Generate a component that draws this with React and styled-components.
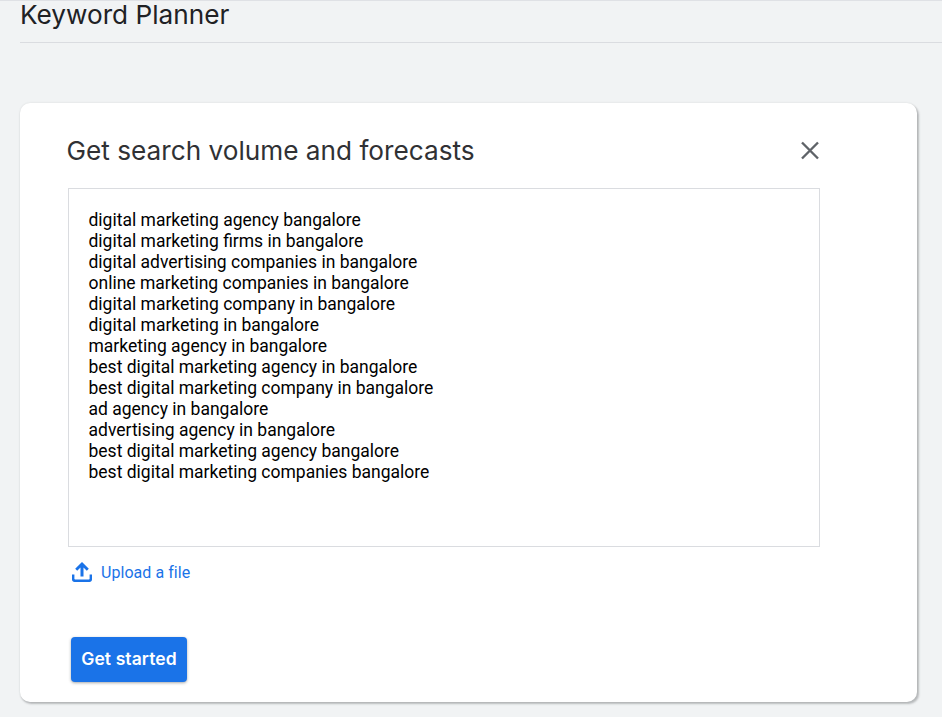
import React from 'react';
import styled, { createGlobalStyle } from 'styled-components';

const GlobalStyle = createGlobalStyle`
  html, body {
    margin: 0;
    height: 100%;
    background: #f1f3f4;
    overflow: hidden;
  }
`;

const Page = styled.div`
  height: 717px;
  box-sizing: border-box;
  padding: 0 0 0 20px;
  border-top: 1px solid #dfe1e5;
  font-family: Roboto, sans-serif;
`;

const Header = styled.header`
  height: 42px;
  box-sizing: border-box;
  border-bottom: 1px solid #dadce0;
  display: flex;
  align-items: flex-start;
`;

const PageTitle = styled.h1`
  margin: 0;
  font-family: Inter, sans-serif;
  font-size: 26.200px;
  line-height: 28px;
  font-weight: 400;
  color: #202124;
`;

const Card = styled.section`
  width: 896.500px;
  height: 599px;
  box-sizing: border-box;
  margin-top: 60px;
  padding: 30px 96.500px 0 47px;
  background: #fff;
  border-radius: 10px;
  box-shadow: 1.500px 2px 2px rgba(60, 64, 67, 0.3), 0 0 2px rgba(60, 64, 67, 0.15);
`;

const CardHead = styled.div`
  display: flex;
  justify-content: space-between;
  align-items: center;
  height: 36px;
`;

const CardTitle = styled.h2`
  margin: 0 0 0 -0.500px;
  font-family: Inter, sans-serif;
  font-size: 26.200px;
  line-height: 36px;
  font-weight: 400;
  color: #303134;
`;

const CloseButton = styled.button`
  display: flex;
  padding: 0;
  border: 0;
  background: none;
  cursor: pointer;
`;

const KeywordBox = styled.div`
  margin: 19px 0 0 1px;
  height: 359px;
  box-sizing: border-box;
  padding: 21px 19.500px;
  border: 1px solid #dadce0;
  font-size: 17.500px;
  line-height: 21px;
  color: #000;
`;

const KeywordLine = styled.div`
  white-space: nowrap;
`;

const UploadLink = styled.a`
  display: flex;
  align-items: center;
  gap: 8px;
  margin: 13px 0 0 4px;
  height: 24px;
  font-size: 16px;
  letter-spacing: 0.05px;
  color: #1a73e8;
  cursor: pointer;
`;

const PrimaryButton = styled.button`
  display: block;
  margin: 53px 0 0 4px;
  width: 116px;
  height: 45px;
  padding: 0 0 2px;
  border: 0;
  border-radius: 4px;
  background: #1a73e8;
  color: #fff;
  font-family: Inter, sans-serif;
  font-size: 17.500px;
  font-weight: 600;
  letter-spacing: 0.1px;
  box-shadow: 0 1px 3px rgba(60, 64, 67, 0.45);
  cursor: pointer;
`;

const keywords = [
  'digital marketing agency bangalore',
  'digital marketing firms in bangalore',
  'digital advertising companies in bangalore',
  'online marketing companies in bangalore',
  'digital marketing company in bangalore',
  'digital marketing in bangalore',
  'marketing agency in bangalore',
  'best digital marketing agency in bangalore',
  'best digital marketing company in bangalore',
  'ad agency in bangalore',
  'advertising agency in bangalore',
  'best digital marketing agency bangalore',
  'best digital marketing companies bangalore',
];

const App = () => (
  <>
    <GlobalStyle />
    <Page>
      <Header>
        <PageTitle>Keyword Planner</PageTitle>
      </Header>
      <Card>
        <CardHead>
          <CardTitle>Get search volume and forecasts</CardTitle>
          <CloseButton aria-label="Close">
            <svg width="20" height="20" viewBox="0 0 20 20" fill="none" stroke="#5f6368" strokeWidth="2.400">
              <path d="M2 1.500l16 16M18 1.500l-16 16" />
            </svg>
          </CloseButton>
        </CardHead>
        <KeywordBox>
          {keywords.map((keyword) => (
            <KeywordLine key={keyword}>{keyword}</KeywordLine>
          ))}
        </KeywordBox>
        <UploadLink>
          <svg width="22" height="22" viewBox="0 0 22 22" fill="#1a73e8">
            <path d="M9.500 15.500V6.500L6.200 9.800 4.200 7.800 11 1l6.800 6.800-2 2-3.300-3.300v9z" />
            <path d="M1 13.500h2.400v4.200c0 .4.300.8.800.8h13.600c.5 0 .8-.4.8-.8v-4.200H21v5c0 1.400-1.100 2.500-2.500 2.500h-15C2.100 21 1 19.900 1 18.500z" />
          </svg>
          Upload a file
        </UploadLink>
        <PrimaryButton>Get started</PrimaryButton>
      </Card>
    </Page>
  </>
);

export default App;
